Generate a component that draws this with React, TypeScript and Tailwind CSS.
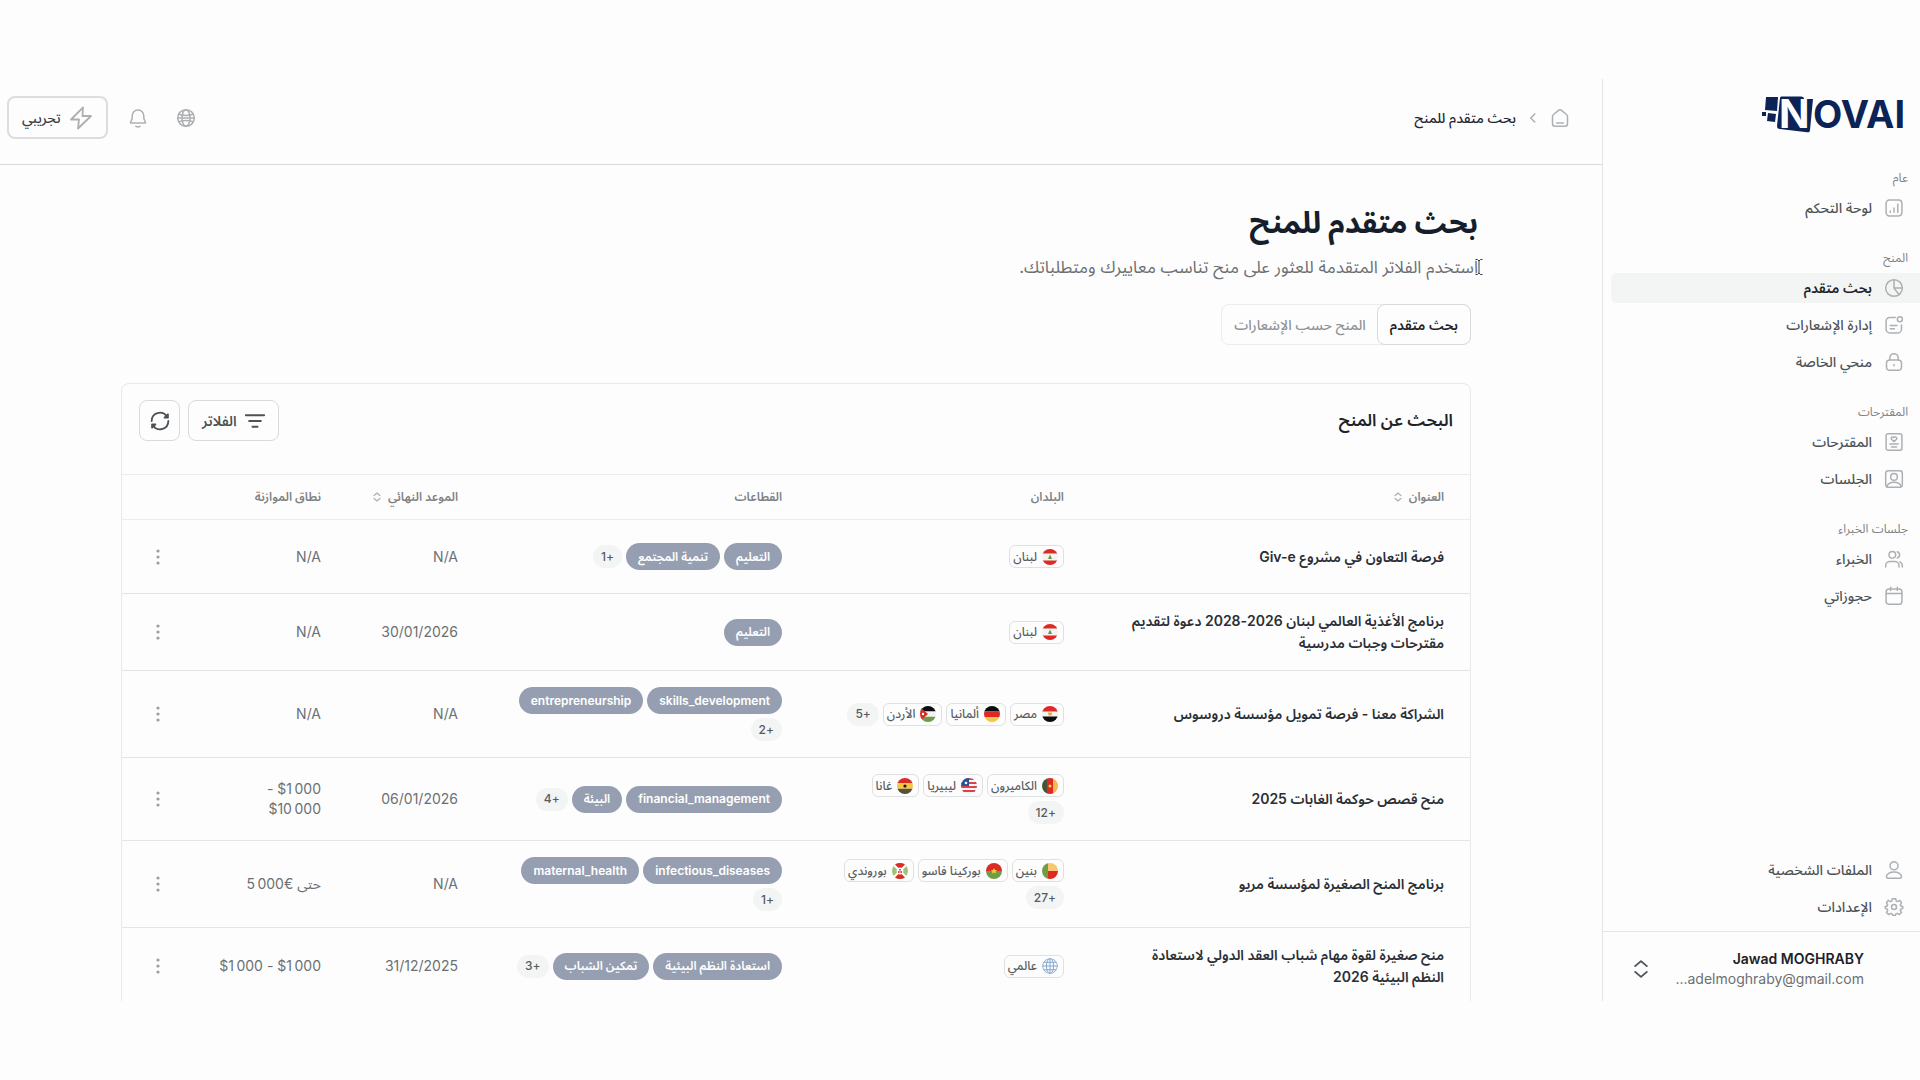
import type { ReactNode } from 'react'

const NNBSP = '\u202f'

const ICONS: Record<string, ReactNode> = {
  chart: (
    <>
      <rect x="2.5" y="2.5" width="19" height="19" rx="4" />
      <path d="M7.5 17v-1.5M12 17v-5M16.5 17V7.5" />
    </>
  ),
  pie: (
    <>
      <circle cx="12" cy="12" r="10" />
      <path d="M12 2v10h10M12 12l6 8" />
    </>
  ),
  note: (
    <>
      <path d="M13.5 3H7a4.5 4.5 0 0 0-4.5 4.5V17A4.5 4.5 0 0 0 7 21.5h9.5A4.5 4.5 0 0 0 21 17v-5" />
      <circle cx="19" cy="5" r="3" />
      <path d="M7.5 12.5h8M7.5 16.5h5" />
    </>
  ),
  lock: (
    <>
      <rect x="3" y="9.5" width="18" height="12.5" rx="4" />
      <path d="M7 9.5V7a5 5 0 0 1 10 0v2.5M12 15v1.5" />
    </>
  ),
  proposal: (
    <>
      <rect x="2.5" y="2" width="19" height="20" rx="2.5" />
      <path d="M12 11.5 9 8.700a1.700 1.700 0 0 1 3-2 1.700 1.700 0 0 1 3 2zM7 14.5h10M9 18h6" />
    </>
  ),
  session: (
    <>
      <rect x="2" y="2" width="20" height="20" rx="3" />
      <circle cx="12" cy="9.5" r="4" />
      <path d="M3.5 21c1-3.500 4.500-5 8.500-5s7.500 1.500 8.500 5" />
    </>
  ),
  users: (
    <>
      <circle cx="10" cy="7" r="4" />
      <path d="M2 21.5V20a5 5 0 0 1 5-5h6a5 5 0 0 1 5 5v1.500M16 3.200a4 4 0 0 1 0 7.600M22 21.500V20a5 5 0 0 0-3-4.500" />
    </>
  ),
  calendar: (
    <>
      <rect x="2.5" y="3.5" width="19" height="18.5" rx="3.5" />
      <path d="M2.5 9h19M8 1.500v4M16 1.500v4" />
    </>
  ),
  user: (
    <>
      <circle cx="12" cy="7" r="4.8" />
      <path d="M3 20c0-3 4-5.500 9-5.500s9 2.500 9 5.500c0 1-.6 1.800-1.800 1.800H4.800C3.600 21.800 3 21 3 20z" />
    </>
  ),
  gear: (
    <>
      <circle cx="12" cy="12" r="3" />
      <path d="M10 2h4l.7 2.900 1.700.7L19 4l2 2.700-1.400 2.700.6 1.400 2.300.7v2l-2.300 1-.7 1.600L21 18.500 18.500 21l-2.700-1.400-1.500.6L13.500 22h-3l-.8-1.800-1.500-.6L5.500 21 3 18.500l1.500-2.400-.7-1.600-2.300-1v-2l2.300-.7.600-1.400L3 6.700 5 4l2.600 1.600 1.700-.7z" />
    </>
  ),
  home: (
    <>
      <path d="M3 10.300c0-1 .4-1.900 1.200-2.500l6-4.900a2.900 2.900 0 0 1 3.600 0l6 4.900c.8.600 1.200 1.500 1.200 2.500V19a3 3 0 0 1-3 3H6a3 3 0 0 1-3-3z" />
      <path d="M8 18h8" />
    </>
  ),
  globe: (
    <>
      <circle cx="12" cy="12" r="10" />
      <ellipse cx="12" cy="12" rx="4.8" ry="10" />
      <path d="M3.500 7.500c5 1.700 12 1.700 17 0M3.500 16.500c5-1.700 12-1.700 17 0M2 12h20" />
    </>
  ),
  bell: <path d="M5 12V9.500a7 7 0 0 1 14 0V12c0 2 2 4 2 6H3c0-2 2-4 2-6zM9.500 22c1.500.8 3.500.8 5 0" />,
  bolt: <path d="M14 1.500 2 13.500h8L9 22.500 22 10h-8.500z" />,
  chevron: <path d="m15 5-7 7 7 7" />,
  sort: <path d="m5 8.500 7-6 7 6M5 15.500l7 6 7-6" />,
  filter: <path d="M1 5h22M5 12h14M9 19h6" />,
  refresh: (
    <>
      <path d="M2 12a10 10 0 0 1 18-6M22 12a10 10 0 0 1-18 6" />
      <path d="M21.500 4v4h-4zM2.500 20v-4h4z" fill="currentColor" />
    </>
  ),
}

type IconProps = { name: string; className?: string; strokeWidth?: number }

function Icon({ name, className = 'size-5', strokeWidth = 1.8 }: IconProps) {
  return (
    <svg
      viewBox="0 0 24 24"
      className={`shrink-0 ${className}`}
      fill="none"
      stroke="currentColor"
      strokeWidth={strokeWidth}
      strokeLinecap="round"
      strokeLinejoin="round"
      aria-hidden="true"
    >
      {ICONS[name]}
    </svg>
  )
}

const FLAGS: Record<string, ReactNode> = {
  lebanon: (
    <>
      <path fill="#f3f3f3" d="M0 0h16v16H0z" />
      <path fill="#dc2a24" d="M0 0h16v4.500H0zM0 11.500h16V16H0z" />
      <path fill="#5f9a4a" d="m8 5.500 2 4.500H6z" />
    </>
  ),
  egypt: (
    <>
      <path fill="#f3f3f3" d="M0 0h16v16H0z" />
      <path fill="#dc2a24" d="M0 0h16v5.500H0z" />
      <path fill="#0b0b14" d="M0 10.500h16V16H0z" />
      <path fill="#f2a640" d="M6 6.500h4v2L8 10 6 8.500z" />
    </>
  ),
  germany: (
    <>
      <path fill="#0b0b14" d="M0 0h16v5.500H0z" />
      <path fill="#dc2a24" d="M0 5.500h16v5.500H0z" />
      <path fill="#f8c545" d="M0 11h16v5H0z" />
    </>
  ),
  jordan: (
    <>
      <path fill="#f3f3f3" d="M0 0h16v16H0z" />
      <path fill="#0b0b14" d="M0 0h16v5.200H0z" />
      <path fill="#6f9d45" d="M0 10.800h16V16H0z" />
      <path fill="#dc2a24" d="m0 1 8 7-8 7z" />
      <circle cx="3" cy="8" r="1.2" fill="#fff" />
    </>
  ),
  cameroon: (
    <>
      <path fill="#44543a" d="M0 0h5v16H0z" />
      <path fill="#dc2a24" d="M5 0h6v16H5z" />
      <path fill="#f4b94a" d="M11 0h5v16h-5z" />
      <circle cx="8" cy="8" r="1.5" fill="#f8d04a" />
    </>
  ),
  liberia: (
    <>
      <path fill="#f3f3f3" d="M0 0h16v16H0z" />
      <path fill="#d9434a" d="M0 0h16v2H0zM0 4h16v2H0zM0 8h16v2H0zM0 12h16v2H0z" />
      <path fill="#26509b" d="M0 0h8v8H0z" />
      <circle cx="5" cy="5" r="1.3" fill="#fff" />
    </>
  ),
  ghana: (
    <>
      <path fill="#dc2a24" d="M0 0h16v5.300H0z" />
      <path fill="#f8c545" d="M0 5.300h16v5.400H0z" />
      <path fill="#57503a" d="M0 10.700h16V16H0z" />
      <circle cx="8" cy="8" r="1.6" fill="#15151c" />
    </>
  ),
  benin: (
    <>
      <path fill="#6f9d45" d="M0 0h6v16H0z" />
      <path fill="#f8c870" d="M6 0h10v8H6z" />
      <path fill="#dc2a24" d="M6 8h10v8H6z" />
    </>
  ),
  burkina: (
    <>
      <path fill="#dc2a24" d="M0 0h16v8H0z" />
      <path fill="#6f9d45" d="M0 8h16v8H0z" />
      <path fill="#f8c545" d="m8 5 1 2h2.200L9.500 8.500l.6 2.200L8 9.500l-2.100 1.200.6-2.200L4.800 7H7z" />
    </>
  ),
  burundi: (
    <>
      <path fill="#9cc47c" d="M0 0h16v16H0z" />
      <path fill="#dc2a24" d="M1 0h14L8 8zM1 16h14L8 8z" />
      <path stroke="#fff" strokeWidth="2" d="m1 1 14 14M15 1 1 15" />
      <circle cx="8" cy="8" r="3.4" fill="#fff" />
      <circle cx="8" cy="6.8" r="0.9" fill="#dc2a24" />
      <circle cx="6.8" cy="9" r="0.9" fill="#dc2a24" />
      <circle cx="9.2" cy="9" r="0.9" fill="#dc2a24" />
    </>
  ),
  world: (
    <g fill="#f4f9fd" stroke="#7fa3c8" strokeWidth="0.9">
      <circle cx="8" cy="8" r="7.4" />
      <ellipse cx="8" cy="8" rx="3.6" ry="7.4" />
      <path d="M8 .6v14.800M.6 8h14.800M2 4.300h12M2 11.700h12" />
    </g>
  ),
}

const NAV = [
  { title: 'عام', items: [{ icon: 'chart', label: 'لوحة التحكم' }] },
  {
    title: 'المنح',
    items: [
      { icon: 'pie', label: 'بحث متقدم', active: true },
      { icon: 'note', label: 'إدارة الإشعارات' },
      { icon: 'lock', label: 'منحي الخاصة' },
    ],
  },
  {
    title: 'المقترحات',
    items: [
      { icon: 'proposal', label: 'المقترحات' },
      { icon: 'session', label: 'الجلسات' },
    ],
  },
  {
    title: 'جلسات الخبراء',
    items: [
      { icon: 'users', label: 'الخبراء' },
      { icon: 'calendar', label: 'حجوزاتي' },
    ],
  },
]

const FOOTER_NAV = [
  { icon: 'user', label: 'الملفات الشخصية' },
  { icon: 'gear', label: 'الإعدادات' },
]

const GRANTS = [
  {
    title: 'فرصة التعاون في مشروع Giv-e',
    countries: [['lebanon', 'لبنان']],
    sectors: ['التعليم', 'تنمية المجتمع'],
    moreSectors: '+1',
    deadline: 'N/A',
    budget: 'N/A',
  },
  {
    title: 'برنامج الأغذية العالمي لبنان 2026-2028 دعوة لتقديم مقترحات وجبات مدرسية',
    countries: [['lebanon', 'لبنان']],
    sectors: ['التعليم'],
    deadline: '30/01/2026',
    budget: 'N/A',
  },
  {
    title: 'الشراكة معنا - فرصة تمويل مؤسسة دروسوس',
    countries: [
      ['egypt', 'مصر'],
      ['germany', 'ألمانيا'],
      ['jordan', 'الأردن'],
    ],
    moreCountries: '+5',
    sectors: ['skills_development', 'entrepreneurship'],
    moreSectors: '+2',
    deadline: 'N/A',
    budget: 'N/A',
  },
  {
    title: 'منح قصص حوكمة الغابات 2025',
    countries: [
      ['cameroon', 'الكاميرون'],
      ['liberia', 'ليبيريا'],
      ['ghana', 'غانا'],
    ],
    moreCountries: '+12',
    sectors: ['financial_management', 'البيئة'],
    moreSectors: '+4',
    deadline: '06/01/2026',
    budget: `$1${NNBSP}000 - $10${NNBSP}000`,
  },
  {
    title: 'برنامج المنح الصغيرة لمؤسسة مريو',
    countries: [
      ['benin', 'بنين'],
      ['burkina', 'بوركينا فاسو'],
      ['burundi', 'بوروندي'],
    ],
    moreCountries: '+27',
    sectors: ['infectious_diseases', 'maternal_health'],
    moreSectors: '+1',
    deadline: 'N/A',
    budget: `حتى €5${NNBSP}000`,
  },
  {
    title: 'منح صغيرة لقوة مهام شباب العقد الدولي لاستعادة النظم البيئية 2026',
    countries: [['world', 'عالمي']],
    sectors: ['استعادة النظم البيئية', 'تمكين الشباب'],
    moreSectors: '+3',
    deadline: '31/12/2025',
    budget: `$1${NNBSP}000 - $1${NNBSP}000`,
  },
]

function Logo() {
  return (
    <svg viewBox="0 -8 144 52" className="h-[52px] w-36" role="img" aria-label="NOVAI">
      <g fill="#0b2356">
        <path d="M4 2h12l-1 14-12-1z" />
        <path d="M0 17h4v4H0zM6 18l8 1-1 8-8-1z" />
        <path d="M20 1.500h19c2 0 3 1 3 2.500h9L48 35c0 2-1 2.500-3 2.300L18 34c-2 0-3-1-3-3l3-28c0-1 1-1.500 2-1.500z" />
        <text x="51" y="33" fontFamily="Inter, sans-serif" fontSize="38" fontWeight="700" direction="ltr">
          OVAI
        </text>
      </g>
      <text x="17" y="33" fill="#fdfdfd" fontFamily="Inter, sans-serif" fontSize="40" fontWeight="700" direction="ltr">
        N
      </text>
    </svg>
  )
}

function NavItem({ icon, label, active }: { icon: string; label: string; active?: boolean }) {
  return (
    <a
      href="#"
      className={`flex h-[30px] items-center gap-3 ps-4 text-sm ${
        active ? 'rounded-e-md bg-[#f3f4f4] font-semibold text-[#1f2328]' : 'font-medium text-[#4d5256]'
      }`}
    >
      <Icon name={icon} className="size-5 text-[#adb0b3]" />
      {label}
    </a>
  )
}

function Sidebar() {
  return (
    <aside className="flex w-[318px] shrink-0 flex-col border-e border-[#e4e5e6]">
      <div className="px-[14px] pt-2">
        <Logo />
      </div>
      <nav className="mt-[29px] flex flex-1 flex-col gap-[25px] pe-2">
        {NAV.map(({ title, items }) => (
          <div key={title}>
            <h2 className="mb-[5px] px-3 text-xs leading-5 text-[#7d8285]">{title}</h2>
            <div className="flex flex-col gap-[7px]">
              {items.map((item) => (
                <NavItem key={item.label} {...item} />
              ))}
            </div>
          </div>
        ))}
        <div className="mt-auto mb-[9px] flex flex-col gap-[7px]">
          {FOOTER_NAV.map((item) => (
            <NavItem key={item.label} {...item} />
          ))}
        </div>
      </nav>
      <button
        type="button"
        className="flex h-[70px] items-center justify-between border-t border-[#e4e5e6] ps-14 pe-7 pt-1 text-start text-sm leading-5"
      >
        <span className="flex flex-col">
          <span className="font-semibold text-[#1c2127]">Jawad MOGHRABY</span>
          <span className="text-[#6b7074]">adelmoghraby@gmail.com...</span>
        </span>
        <Icon name="sort" className="size-5 text-[#4d5256]" strokeWidth={2.2} />
      </button>
    </aside>
  )
}

function Header() {
  return (
    <header className="flex h-[86px] shrink-0 items-center justify-between border-b border-[#d9dadb] ps-8 pe-[7px] pb-2">
      <div className="flex items-center gap-[10px]">
        <a href="#" aria-label="الرئيسية">
          <Icon name="home" className="size-5 text-[#adb0b3]" />
        </a>
        <Icon name="chevron" className="size-[14px] text-[#adb0b3]" strokeWidth={2.6} />
        <span className="text-sm font-medium text-[#1f2733]">بحث متقدم للمنح</span>
      </div>
      <div className="flex items-center">
        <button type="button" aria-label="اللغة" className="p-[14px] text-[#adb0b3]">
          <Icon name="globe" />
        </button>
        <button type="button" aria-label="التنبيهات" className="p-[14px] text-[#adb0b3]">
          <Icon name="bell" />
        </button>
        <button
          type="button"
          className="ms-[6px] flex h-[43px] items-center gap-2 rounded-lg border-2 border-[#dcdddd] px-[13px] text-sm font-medium text-[#3a4046]"
        >
          <Icon name="bolt" className="size-6 text-[#adb0b3]" />
          تجريبي
        </button>
      </div>
    </header>
  )
}

function CountryTag({ flag, name }: { flag: string; name: string }) {
  return (
    <span className="flex h-[23px] items-center gap-[5px] rounded-md border border-[#dfe0e1] ps-[5px] pe-[3px] text-xs font-medium text-[#575c60]">
      <svg viewBox="0 0 16 16" className="size-4 shrink-0 rounded-full" aria-hidden="true">
        {FLAGS[flag]}
      </svg>
      {name}
    </span>
  )
}

function MoreBadge({ children }: { children: ReactNode }) {
  return (
    <span className="flex h-[23px] items-center rounded-full bg-[#f3f4f4] px-2 text-xs font-medium text-[#575c60]">
      {children}
    </span>
  )
}

function SortableHeading({ children }: { children: ReactNode }) {
  return (
    <button type="button" className="flex items-center gap-[6px]">
      {children}
      <Icon name="sort" className="size-[10px] text-[#adb0b3]" strokeWidth={3} />
    </button>
  )
}

function GrantsTable() {
  return (
    <table className="w-full table-fixed text-start">
      <thead>
        <tr className="h-[45px] border-y border-[#ebecec] text-xs text-[#7d8285]">
          <th className="px-[26px] text-start font-semibold">
            <SortableHeading>العنوان</SortableHeading>
          </th>
          <th className="w-[282px] px-[26px] text-start font-semibold">البلدان</th>
          <th className="w-[324px] px-[26px] text-start font-semibold">القطاعات</th>
          <th className="w-[137px] ps-[26px] text-start font-semibold whitespace-nowrap">
            <SortableHeading>الموعد النهائي</SortableHeading>
          </th>
          <th className="w-[163px] px-[26px] text-start font-semibold">نطاق الموازنة</th>
          <th className="w-[62px]" aria-label="إجراءات" />
        </tr>
      </thead>
      <tbody>
        {GRANTS.map((grant) => (
          <tr key={grant.title} className="border-b border-[#e4e5e6] text-sm text-[#6b7074]">
            <td className="py-4 ps-[26px] pe-8 leading-[22px] font-semibold text-[#2a2f35]">{grant.title}</td>
            <td className="py-4 ps-[26px] pe-8">
              <div className="flex flex-wrap items-center gap-1">
                {grant.countries.map(([flag, name]) => (
                  <CountryTag key={name} flag={flag} name={name} />
                ))}
                {grant.moreCountries && <MoreBadge>{grant.moreCountries}</MoreBadge>}
              </div>
            </td>
            <td className="px-[26px] py-4">
              <div className="flex flex-wrap items-center gap-1">
                {grant.sectors.map((sector) => (
                  <span
                    key={sector}
                    className="flex h-[27px] items-center rounded-full bg-[#969fb1] px-3 text-xs font-semibold text-white"
                  >
                    {sector}
                  </span>
                ))}
                {grant.moreSectors && <MoreBadge>{grant.moreSectors}</MoreBadge>}
              </div>
            </td>
            <td className="px-[26px] py-4">{grant.deadline}</td>
            <td className="py-4 ps-[26px] pe-8 leading-5">{grant.budget}</td>
            <td className="py-4">
              <button
                type="button"
                aria-label="المزيد"
                className="flex h-[41px] w-13 items-center justify-center text-[#9a9ea1]"
              >
                <svg viewBox="0 0 4 16" className="h-4 w-1" fill="currentColor" aria-hidden="true">
                  <circle cx="2" cy="2" r="1.6" />
                  <circle cx="2" cy="8" r="1.6" />
                  <circle cx="2" cy="14" r="1.6" />
                </svg>
              </button>
            </td>
          </tr>
        ))}
      </tbody>
    </table>
  )
}

export default function App() {
  return (
    <div
      dir="rtl"
      lang="ar"
      className="h-screen bg-[#fdfdfd] py-[79px] font-[Inter,'Noto_Sans_Arabic','Noto_Sans',sans-serif] text-[#1f2328]"
    >
      <div className="flex h-full overflow-hidden">
        <Sidebar />
        <div className="flex min-w-0 flex-1 flex-col">
          <Header />
          <main className="min-h-0 flex-1 overflow-hidden ps-[131px] pe-[121px]">
            <div className="relative -ms-[7px] pt-8">
              <h1 className="text-3xl leading-[50px] font-bold text-[#161e2b]">بحث متقدم للمنح</h1>
              <p className="mt-2 text-[17px] leading-6 text-[#6b7074]">
                استخدم الفلاتر المتقدمة للعثور على منح تناسب معاييرك ومتطلباتك.
              </p>
              <svg
                viewBox="0 0 8 16"
                className="absolute -start-[5px] bottom-1 h-4 w-2"
                fill="none"
                stroke="#3a3a3a"
                aria-hidden="true"
              >
                <path d="M.5.500h2L4 2 5.500.500h2M4 2v12M.5 15.500h2L4 14l1.500 1.500h2" />
              </svg>
            </div>

            <div className="mt-[25px] flex w-fit rounded-lg border border-[#ebecec]">
              <button
                type="button"
                className="-m-px h-[41px] rounded-lg border border-[#d9dadb] px-3 text-sm font-semibold"
              >
                بحث متقدم
              </button>
              <button type="button" className="px-3 text-sm font-medium text-[#8f9396]">
                المنح حسب الإشعارات
              </button>
            </div>

            <section className="mt-[38px] rounded-t-lg border border-[#e8e9e9]">
              <div className="flex h-[90px] items-start justify-between px-[17px] pt-4">
                <h2 className="text-[17px] leading-[41px] font-semibold">البحث عن المنح</h2>
                <div className="flex gap-2">
                  <button
                    type="button"
                    className="flex h-[41px] items-center gap-2 rounded-lg border border-[#d9dadb] px-[13px] text-sm font-semibold text-[#4d5256]"
                  >
                    <Icon name="filter" className="size-5" strokeWidth={2.4} />
                    الفلاتر
                  </button>
                  <button
                    type="button"
                    aria-label="تحديث"
                    className="flex size-[41px] items-center justify-center rounded-lg border border-[#d9dadb] text-[#4d5256]"
                  >
                    <Icon name="refresh" strokeWidth={2.2} />
                  </button>
                </div>
              </div>
              <GrantsTable />
            </section>
          </main>
        </div>
      </div>
    </div>
  )
}
